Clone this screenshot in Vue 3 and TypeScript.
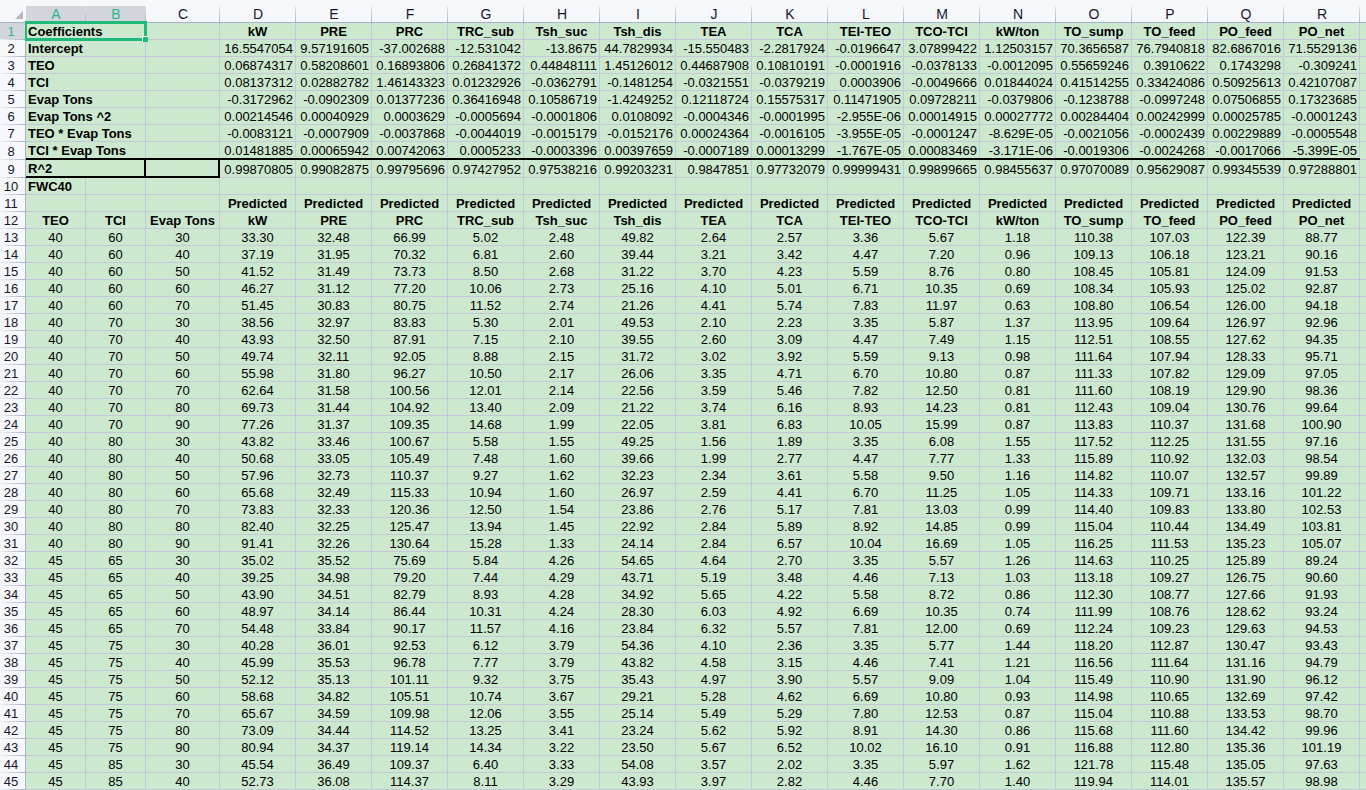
<script setup lang="ts">
interface CoefficientRow {
  label: string
  values: string[]
}

const columns: string[] = 'ABCDEFGHIJKLMNOPQR'.split('')

const metrics: string[] = [
  'kW', 'PRE', 'PRC', 'TRC_sub', 'Tsh_suc', 'Tsh_dis', 'TEA', 'TCA',
  'TEI-TEO', 'TCO-TCI', 'kW/ton', 'TO_sump', 'TO_feed', 'PO_feed', 'PO_net',
]

const cells = (line: string): string[] => line.trim().split(/\s+/)

const coefficients: CoefficientRow[] = [
  { label: 'Intercept', values: cells('16.5547054 9.57191605 -37.002688 -12.531042 -13.8675 44.7829934 -15.550483 -2.2817924 -0.0196647 3.07899422 1.12503157 70.3656587 76.7940818 82.6867016 71.5529136') },
  { label: 'TEO', values: cells('0.06874317 0.58208601 0.16893806 0.26841372 0.44848111 1.45126012 0.44687908 0.10810191 -0.0001916 -0.0378133 -0.0012095 0.55659246 0.3910622 0.1743298 -0.309241') },
  { label: 'TCI', values: cells('0.08137312 0.02882782 1.46143323 0.01232926 -0.0362791 -0.1481254 -0.0321551 -0.0379219 0.0003906 -0.0049666 0.01844024 0.41514255 0.33424086 0.50925613 0.42107087') },
  { label: 'Evap Tons', values: cells('-0.3172962 -0.0902309 0.01377236 0.36416948 0.10586719 -1.4249252 0.12118724 0.15575317 0.11471905 0.09728211 -0.0379806 -0.1238788 -0.0997248 0.07506855 0.17323685') },
  { label: 'Evap Tons ^2', values: cells('0.00214546 0.00040929 0.0003629 -0.0005694 -0.0001806 0.0108092 -0.0004346 -0.0001995 -2.955E-06 0.00014915 0.00027772 0.00284404 0.00242999 0.00025785 -0.0001243') },
  { label: 'TEO * Evap Tons', values: cells('-0.0083121 -0.0007909 -0.0037868 -0.0044019 -0.0015179 -0.0152176 0.00024364 -0.0016105 -3.955E-05 -0.0001247 -8.629E-05 -0.0021056 -0.0002439 0.00229889 -0.0005548') },
  { label: 'TCI * Evap Tons', values: cells('0.01481885 0.00065942 0.00742063 0.0005233 -0.0003396 0.00397659 -0.0007189 0.00013299 -1.767E-05 0.00083469 -3.171E-06 -0.0019306 -0.0024268 -0.0017066 -5.399E-05') },
  { label: 'R^2', values: cells('0.99870805 0.99082875 0.99795696 0.97427952 0.97538216 0.99203231 0.9847851 0.97732079 0.99999431 0.99899665 0.98455637 0.97070089 0.95629087 0.99345539 0.97288801') },
]

const predictions: string[][] = `
40 60 30 33.30 32.48 66.99 5.02 2.48 49.82 2.64 2.57 3.36 5.67 1.18 110.38 107.03 122.39 88.77
40 60 40 37.19 31.95 70.32 6.81 2.60 39.44 3.21 3.42 4.47 7.20 0.96 109.13 106.18 123.21 90.16
40 60 50 41.52 31.49 73.73 8.50 2.68 31.22 3.70 4.23 5.59 8.76 0.80 108.45 105.81 124.09 91.53
40 60 60 46.27 31.12 77.20 10.06 2.73 25.16 4.10 5.01 6.71 10.35 0.69 108.34 105.93 125.02 92.87
40 60 70 51.45 30.83 80.75 11.52 2.74 21.26 4.41 5.74 7.83 11.97 0.63 108.80 106.54 126.00 94.18
40 70 30 38.56 32.97 83.83 5.30 2.01 49.53 2.10 2.23 3.35 5.87 1.37 113.95 109.64 126.97 92.96
40 70 40 43.93 32.50 87.91 7.15 2.10 39.55 2.60 3.09 4.47 7.49 1.15 112.51 108.55 127.62 94.35
40 70 50 49.74 32.11 92.05 8.88 2.15 31.72 3.02 3.92 5.59 9.13 0.98 111.64 107.94 128.33 95.71
40 70 60 55.98 31.80 96.27 10.50 2.17 26.06 3.35 4.71 6.70 10.80 0.87 111.33 107.82 129.09 97.05
40 70 70 62.64 31.58 100.56 12.01 2.14 22.56 3.59 5.46 7.82 12.50 0.81 111.60 108.19 129.90 98.36
40 70 80 69.73 31.44 104.92 13.40 2.09 21.22 3.74 6.16 8.93 14.23 0.81 112.43 109.04 130.76 99.64
40 70 90 77.26 31.37 109.35 14.68 1.99 22.05 3.81 6.83 10.05 15.99 0.87 113.83 110.37 131.68 100.90
40 80 30 43.82 33.46 100.67 5.58 1.55 49.25 1.56 1.89 3.35 6.08 1.55 117.52 112.25 131.55 97.16
40 80 40 50.68 33.05 105.49 7.48 1.60 39.66 1.99 2.77 4.47 7.77 1.33 115.89 110.92 132.03 98.54
40 80 50 57.96 32.73 110.37 9.27 1.62 32.23 2.34 3.61 5.58 9.50 1.16 114.82 110.07 132.57 99.89
40 80 60 65.68 32.49 115.33 10.94 1.60 26.97 2.59 4.41 6.70 11.25 1.05 114.33 109.71 133.16 101.22
40 80 70 73.83 32.33 120.36 12.50 1.54 23.86 2.76 5.17 7.81 13.03 0.99 114.40 109.83 133.80 102.53
40 80 80 82.40 32.25 125.47 13.94 1.45 22.92 2.84 5.89 8.92 14.85 0.99 115.04 110.44 134.49 103.81
40 80 90 91.41 32.26 130.64 15.28 1.33 24.14 2.84 6.57 10.04 16.69 1.05 116.25 111.53 135.23 105.07
45 65 30 35.02 35.52 75.69 5.84 4.26 54.65 4.64 2.70 3.35 5.57 1.26 114.63 110.25 125.89 89.24
45 65 40 39.25 34.98 79.20 7.44 4.29 43.71 5.19 3.48 4.46 7.13 1.03 113.18 109.27 126.75 90.60
45 65 50 43.90 34.51 82.79 8.93 4.28 34.92 5.65 4.22 5.58 8.72 0.86 112.30 108.77 127.66 91.93
45 65 60 48.97 34.14 86.44 10.31 4.24 28.30 6.03 4.92 6.69 10.35 0.74 111.99 108.76 128.62 93.24
45 65 70 54.48 33.84 90.17 11.57 4.16 23.84 6.32 5.57 7.81 12.00 0.69 112.24 109.23 129.63 94.53
45 75 30 40.28 36.01 92.53 6.12 3.79 54.36 4.10 2.36 3.35 5.77 1.44 118.20 112.87 130.47 93.43
45 75 40 45.99 35.53 96.78 7.77 3.79 43.82 4.58 3.15 4.46 7.41 1.21 116.56 111.64 131.16 94.79
45 75 50 52.12 35.13 101.11 9.32 3.75 35.43 4.97 3.90 5.57 9.09 1.04 115.49 110.90 131.90 96.12
45 75 60 58.68 34.82 105.51 10.74 3.67 29.21 5.28 4.62 6.69 10.80 0.93 114.98 110.65 132.69 97.42
45 75 70 65.67 34.59 109.98 12.06 3.55 25.14 5.49 5.29 7.80 12.53 0.87 115.04 110.88 133.53 98.70
45 75 80 73.09 34.44 114.52 13.25 3.41 23.24 5.62 5.92 8.91 14.30 0.86 115.68 111.60 134.42 99.96
45 75 90 80.94 34.37 119.14 14.34 3.22 23.50 5.67 6.52 10.02 16.10 0.91 116.88 112.80 135.36 101.19
45 85 30 45.54 36.49 109.37 6.40 3.33 54.08 3.57 2.02 3.35 5.97 1.62 121.78 115.48 135.05 97.63
45 85 40 52.73 36.08 114.37 8.11 3.29 43.93 3.97 2.82 4.46 7.70 1.40 119.94 114.01 135.57 98.98
`.trim().split('\n').map(cells)

const isSelected = (column: string): boolean => column === 'A' || column === 'B'
</script>

<template>
  <main class="workbook">
    <table class="sheet">
      <colgroup>
        <col class="col-index">
        <col class="col-key">
        <col class="col-key">
        <col class="col-load">
        <col v-for="metric in metrics" :key="metric" class="col-metric">
        <col>
      </colgroup>
      <thead>
        <tr>
          <td class="corner">
            <svg width="8" height="8" viewBox="0 0 8 8" aria-hidden="true">
              <path d="M8 0V8H0Z" fill="#b8babd" />
            </svg>
          </td>
          <th v-for="column in columns" :key="column" scope="col">
            <div class="letter" :class="{ active: isSelected(column) }">{{ column }}</div>
          </th>
          <td></td>
        </tr>
      </thead>
      <tbody>
        <tr>
          <th scope="row" class="active">1</th>
          <td colspan="2" class="label selected">
            Coefficients
            <span class="selection"><span class="handle"></span></span>
          </td>
          <td></td>
          <td v-for="metric in metrics" :key="metric" class="title">{{ metric }}</td>
          <td></td>
        </tr>
        <tr
          v-for="(row, i) in coefficients"
          :key="row.label"
          :class="{ last: i === 6, fit: i === 7 }"
        >
          <th scope="row">{{ i + 2 }}</th>
          <td colspan="2" class="label boxed">{{ row.label }}</td>
          <td class="boxed"></td>
          <td v-for="(value, j) in row.values" :key="j" class="number">{{ value }}</td>
          <td class="rest"></td>
        </tr>
        <tr>
          <th scope="row">10</th>
          <td class="label">FWC40</td>
          <td v-for="n in 18" :key="n"></td>
        </tr>
        <tr>
          <th scope="row">11</th>
          <td></td>
          <td></td>
          <td></td>
          <td v-for="metric in metrics" :key="metric" class="title">Predicted</td>
          <td></td>
        </tr>
        <tr>
          <th scope="row">12</th>
          <td class="title">TEO</td>
          <td class="title">TCI</td>
          <td class="title">Evap Tons</td>
          <td v-for="metric in metrics" :key="metric" class="title">{{ metric }}</td>
          <td></td>
        </tr>
        <tr v-for="(row, i) in predictions" :key="i">
          <th scope="row">{{ i + 13 }}</th>
          <td v-for="(value, j) in row" :key="j">{{ value }}</td>
          <td></td>
        </tr>
      </tbody>
    </table>
  </main>
</template>

<style>
body {
  margin: 0;
  background: #cce8cf;
}
</style>

<style scoped>
.workbook {
  overflow-x: clip;
  background: #cce8cf;
  color: #000;
  font: 13px/14px "Liberation Sans", Arial, sans-serif;
}

.sheet {
  width: 100%;
  table-layout: fixed;
  border-collapse: separate;
  border-spacing: 0;
}

.col-index { width: 26px; }
.col-key { width: 60px; }
.col-load { width: 74px; }
.col-metric { width: 76px; }

th,
td {
  box-sizing: border-box;
  height: 17px;
  padding: 0;
  text-align: center;
  vertical-align: bottom;
  white-space: nowrap;
  font-weight: 400;
}

tbody td {
  border-right: 1px solid #c5c8da;
  border-bottom: 1px solid #c5c8da;
}

tr > td:last-child {
  border-right: 0;
}

tbody .label {
  padding-left: 2px;
  text-align: left;
  font-weight: 700;
}

tbody .title {
  font-weight: 700;
}

tbody .number {
  padding-right: 2px;
  text-align: right;
}

thead th,
thead td {
  height: 23px;
  padding-top: 6px;
  border-bottom: 1px solid #a8b2ca;
  background: #f6f8fb;
}

.letter {
  height: 16px;
  background: linear-gradient(#e4e7ee, #a8b2ca) right / 1px 100% no-repeat;
  color: #17172e;
  font-size: 14px;
  line-height: 16px;
}

.letter.active {
  background-color: #d2d5dc;
  color: #2bb585;
}

thead .corner {
  padding: 0 3px 3px 0;
  text-align: right;
}

.corner svg {
  display: block;
  margin-left: auto;
}

tbody th {
  padding: 0 3px 1px 0;
  border-right: 1px solid #a8b2ca;
  background: linear-gradient(to right, #eef0f5, #a8b2ca) bottom / 100% 1px no-repeat #f6f8fb;
  color: #17172e;
}

tbody th.active {
  background-color: #d2d5dc;
  color: #2bb585;
}

.last > *,
.fit > * {
  height: 18px;
}

/* Painted as backgrounds so the heavy rule runs unbroken across the column lines. */
.last td:not(.rest) {
  padding-bottom: 2px;
  border: 0;
  background:
    linear-gradient(#000, #000) bottom / 100% 2px no-repeat,
    linear-gradient(#c5c8da, #c5c8da) right / 1px 100% no-repeat;
}

.last .number {
  padding-right: 3px;
}

.fit .boxed {
  border-right: 2px solid #000;
  border-bottom: 2px solid #000;
}

.selected {
  position: relative;
}

.selection {
  position: absolute;
  inset: -2px -2px -2px -1px;
  border: 3px solid #21ba7d;
  border-left-width: 2px;
  pointer-events: none;
}

.handle {
  position: absolute;
  right: -4px;
  bottom: -4px;
  width: 5px;
  height: 5px;
  border-top: 1px solid #fff;
  border-left: 1px solid #fff;
  background: #21ba7d;
}
</style>
